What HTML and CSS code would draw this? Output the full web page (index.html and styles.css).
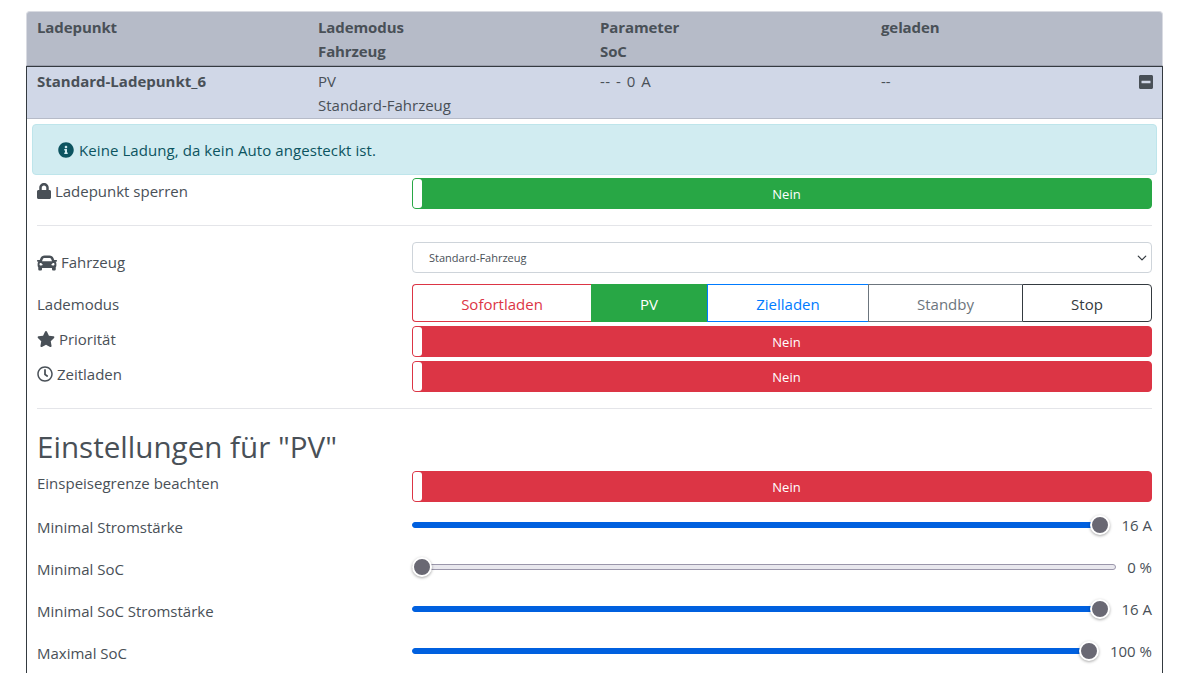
FILE: index.html
```html
<!DOCTYPE html>
<html lang="de">
<head>
<meta charset="utf-8">
<title>Ladepunkte</title>
<link rel="stylesheet" href="styles.css">
</head>
<body>
<main class="page">
  <div class="cols head">
    <div><div>Ladepunkt</div></div>
    <div><div>Lademodus</div><div>Fahrzeug</div></div>
    <div><div>Parameter</div><div>SoC</div></div>
    <div><div>geladen</div></div>
  </div>
  <section class="card">
    <div class="cols row">
      <div><div class="name">Standard-Ladepunkt_6</div></div>
      <div><div>PV</div><div>Standard-Fahrzeug</div></div>
      <div><div class="soc">-- - 0 A</div></div>
      <div class="last"><div>--</div>
        <svg class="ico collapse" viewBox="0 0 448 512"><path d="M400 32H48C21.5 32 0 53.5 0 80v352c0 26.5 21.5 48 48 48h352c26.5 0 48-21.5 48-48V80c0-26.5-21.5-48-48-48zM92 296c-6.6 0-12-5.4-12-12v-56c0-6.6 5.4-12 12-12h264c6.6 0 12 5.4 12 12v56c0 6.6-5.4 12-12 12H92z"/></svg>
      </div>
    </div>
    <div class="alert">
      <svg class="ico" viewBox="0 0 512 512"><path d="M256 8C119.043 8 8 119.083 8 256c0 136.997 111.043 248 248 248s248-111.003 248-248C504 119.083 392.957 8 256 8zm0 110c23.196 0 42 18.804 42 42s-18.804 42-42 42-42-18.804-42-42 18.804-42 42-42zm56 254c0 6.627-5.373 12-12 12h-88c-6.627 0-12-5.373-12-12v-24c0-6.627 5.373-12 12-12h12v-64h-12c-6.627 0-12-5.373-12-12v-24c0-6.627 5.373-12 12-12h64c6.627 0 12 5.373 12 12v100h12c6.627 0 12 5.373 12 12v24z"/></svg>
      <span>Keine Ladung, da kein Auto angesteckt ist.</span>
    </div>
    <div class="body">
      <div class="form-row r-lock">
        <label class="lbl"><svg class="ico" viewBox="0 0 448 512"><path d="M400 224h-24v-72C376 68.2 307.8 0 224 0S72 68.2 72 152v72H48c-26.5 0-48 21.5-48 48v192c0 26.5 21.5 48 48 48h352c26.5 0 48-21.5 48-48V272c0-26.5-21.5-48-48-48zm-104 0H152v-72c0-39.7 32.3-72 72-72s72 32.3 72 72v72z"/></svg> Ladepunkt sperren</label>
        <div class="toggle green"><span class="knob"></span><span class="tlabel">Nein</span></div>
      </div>
      <hr class="rule r1">
      <div class="form-row r-veh">
        <label class="lbl"><svg class="ico car" viewBox="0 0 512 512"><path d="M499.99 176h-59.87l-16.64-41.6C406.38 91.63 365.57 64 319.5 64h-127c-46.06 0-86.88 27.63-103.99 70.4L71.87 176H12.01C4.2 176-1.53 183.34.37 190.91l6 24C7.7 220.25 12.5 224 18.01 224h20.07C24.65 235.73 16 252.78 16 272v48c0 16.12 6.16 30.67 16 41.93V416c0 17.67 14.33 32 32 32h32c17.67 0 32-14.33 32-32v-32h256v32c0 17.67 14.33 32 32 32h32c17.67 0 32-14.33 32-32v-54.07c9.84-11.25 16-25.8 16-41.93v-48c0-19.22-8.65-36.27-22.07-48H494c5.51 0 10.31-3.75 11.64-9.09l6-24c1.89-7.57-3.84-14.91-11.65-14.91zm-352.06-17.83c7.29-18.22 24.94-30.17 44.57-30.17h127c19.63 0 37.28 11.95 44.57 30.17L384 208H128l19.93-49.83zM96 319.8c-19.2 0-32-12.76-32-31.9S76.8 256 96 256s48 28.71 48 47.85-28.8 15.95-48 15.95zm320 0c-19.2 0-48 3.19-48-15.95S396.8 256 416 256s32 12.76 32 31.9-12.8 31.9-32 31.9z"/></svg> Fahrzeug</label>
        <div class="select"><span>Standard-Fahrzeug</span>
          <svg class="chev" viewBox="0 0 16 16"><path fill="none" stroke="#343a40" stroke-linecap="round" stroke-linejoin="round" stroke-width="2" d="M2 5l6 6 6-6"/></svg>
        </div>
      </div>
      <div class="form-row r-mode">
        <label class="lbl">Lademodus</label>
        <div class="btn-group">
          <span class="btn b-red">Sofortladen</span>
          <span class="btn b-green">PV</span>
          <span class="btn b-blue">Zielladen</span>
          <span class="btn b-gray">Standby</span>
          <span class="btn b-dark">Stop</span>
        </div>
      </div>
      <div class="form-row r-tog">
        <label class="lbl"><svg class="ico" viewBox="0 0 576 512"><path d="M259.3 17.8L194 150.2 47.9 171.5c-26.2 3.8-36.7 36.1-17.7 54.6l105.7 103-25 145.5c-4.5 26.3 23.2 46 46.4 33.7L288 439.6l130.7 68.7c23.2 12.2 50.9-7.4 46.4-33.7l-25-145.5 105.7-103c19-18.5 8.5-50.8-17.7-54.6L382 150.2 316.7 17.8c-11.7-23.6-45.6-23.9-57.4 0z"/></svg> Priorität</label>
        <div class="toggle red"><span class="knob"></span><span class="tlabel">Nein</span></div>
      </div>
      <div class="form-row r-tog">
        <label class="lbl"><svg class="ico" viewBox="0 0 512 512"><path d="M256 8C119 8 8 119 8 256s111 248 248 248 248-111 248-248S393 8 256 8zm0 448c-110.5 0-200-89.5-200-200S145.5 56 256 56s200 89.5 200 200-89.5 200-200 200zm61.8-104.4l-84.9-61.7c-3.1-2.3-4.9-5.9-4.9-9.7V116c0-6.6 5.4-12 12-12h32c6.6 0 12 5.4 12 12v141.7l66.8 48.6c5.4 3.9 6.5 11.4 2.6 16.8L334.6 349c-3.9 5.3-11.4 6.5-16.8 2.6z"/></svg> Zeitladen</label>
        <div class="toggle red"><span class="knob"></span><span class="tlabel">Nein</span></div>
      </div>
      <hr class="rule r2">
      <h2 class="title">Einstellungen für "PV"</h2>
      <div class="form-row r-feed">
        <label class="lbl">Einspeisegrenze beachten</label>
        <div class="toggle red"><span class="knob"></span><span class="tlabel">Nein</span></div>
      </div>
      <div class="form-row r-slide">
        <label class="lbl">Minimal Stromstärke</label>
        <div class="range"><div class="track full"><span class="thumb at-end"></span></div><output>16 A</output></div>
      </div>
      <div class="form-row r-slide">
        <label class="lbl">Minimal SoC</label>
        <div class="range"><div class="track"><span class="thumb"></span></div><output>0 %</output></div>
      </div>
      <div class="form-row r-slide">
        <label class="lbl">Minimal SoC Stromstärke</label>
        <div class="range"><div class="track full"><span class="thumb at-end"></span></div><output>16 A</output></div>
      </div>
      <div class="form-row r-slide">
        <label class="lbl">Maximal SoC</label>
        <div class="range"><div class="track full"><span class="thumb at-end"></span></div><output>100 %</output></div>
      </div>
    </div>
  </section>
</main>
</body>
</html>
```
FILE: styles.css
```css
* { box-sizing: border-box; }
html, body { margin: 0; padding: 0; height: 673px; overflow: hidden; background: #fff; }
body { font-family: "Open Sans", "Noto Sans", sans-serif; font-size: 15px; line-height: 24px; color: #495057; }
.page { padding: 11px 26px 0 26px; }
.ico { height: 16px; width: auto; fill: currentColor; vertical-align: -2px; }
.car { height: 20px; vertical-align: -5px; }
.cols { display: grid; grid-template-columns: 281px 282px 281px 281px; padding: 0 10px; }
.head { background: #b6bbc8; border: 1px solid #d9dbe2; border-bottom: 1px solid #9a9eac; border-radius: 4px 4px 0 0; height: 55px; padding-top: 3px; font-weight: 700; letter-spacing: -.1px; }
.card { border: 1px solid #343a40; border-bottom: 0; height: 640px; }
.row { background: #d0d7e7; height: 52px; padding-top: 2px; border-bottom: 1px solid #b6bbc8; }
.name { font-weight: 700; }
.soc { word-spacing: 1.5px; letter-spacing: .3px; }
.last { display: flex; justify-content: space-between; }
.collapse { width: 14px; height: 16px; margin: 5px 0 0 0; position: relative; left: -9px; }
.alert { margin: 5px 5px 0 5px; height: 51px; background: #d1ecf1; border: 1px solid #bee5eb; border-radius: 4px; color: #0c5460; padding: 0 25px; display: flex; align-items: center; gap: 5px; letter-spacing: .08px; }
.body { padding: 0 10px; }
.form-row { display: grid; grid-template-columns: 375px 740px; }
.r-lock { margin-top: 3px; }
.r-lock .lbl { padding-top: 1px; }
.r-veh .lbl { padding-top: 8px; }
.r-mode { margin-top: 10px; }
.r-mode .lbl { padding-top: 8px; }
.r-tog { margin-top: 4px; }
.r-tog .lbl { padding-top: 1px; }
.r-slide { height: 42px; }
.r-slide .lbl { padding-top: 11px; }
.r-feed + .r-slide { margin-top: 2px; }
.lbl { display: block; }
.rule { margin: 0; border: 0; border-top: 1px solid #e4e5e9; }
.r1 { margin: 16px 0; }
.r2 { margin-top: 16px; }
.title { font-size: 29.6px; font-weight: 400; line-height: 38px; margin: 19px 0 5px; }
.toggle { height: 31px; border: 1px solid; border-radius: 4px; display: flex; align-items: center; color: #fff; font-size: 13px; }
.green { background: #28a745; border-color: #28a745; }
.red { background: #dc3545; border-color: #dc3545; }
.knob { width: 9px; height: 29px; background: #fff; border-radius: 3px; flex: none; }
.tlabel { flex: 1; text-align: center; }
.select { height: 31px; border: 1px solid #ced4da; border-radius: 4px; display: flex; align-items: center; justify-content: space-between; padding: 0 4px 0 16px; font-size: 11px; color: #495057; }
.chev { width: 10px; height: 10px; }
.btn-group { display: grid; grid-template-columns: 179px 116px 161px 154px 130px; height: 38px; }
.btn { display: flex; align-items: center; justify-content: center; border: 1px solid; background: #fff; padding-top: 1px; }
.b-red { color: #dc3545; border-color: #dc3545; border-right: 0; border-radius: 4px 0 0 4px; }
.b-green { color: #fff; background: #28a745; border-color: #28a745; }
.b-blue { color: #007bff; border-color: #007bff; border-right: 0; }
.b-gray { color: #6c757d; border-color: #6c757d; border-right: 0; }
.b-dark { color: #343a40; border-color: #343a40; border-radius: 0 4px 4px 0; }
.range { display: flex; align-items: flex-start; gap: 11px; padding-top: 18px; }
.track { flex: 1; height: 6px; border: 1px solid #9b97ab; border-radius: 3px; background: #e9e8ee; position: relative; }
.track.full { background: #0060df; border-color: #0060df; margin-right: 9px; }
.thumb { position: absolute; top: -8px; left: -1px; width: 20px; height: 20px; border-radius: 50%; background: #696873; border: 2px solid #fff; box-shadow: 0 1px 3px rgba(0,0,0,.35); }
.thumb.at-end { left: auto; right: -10px; }
output { display: block; margin-top: -9px; }
```
